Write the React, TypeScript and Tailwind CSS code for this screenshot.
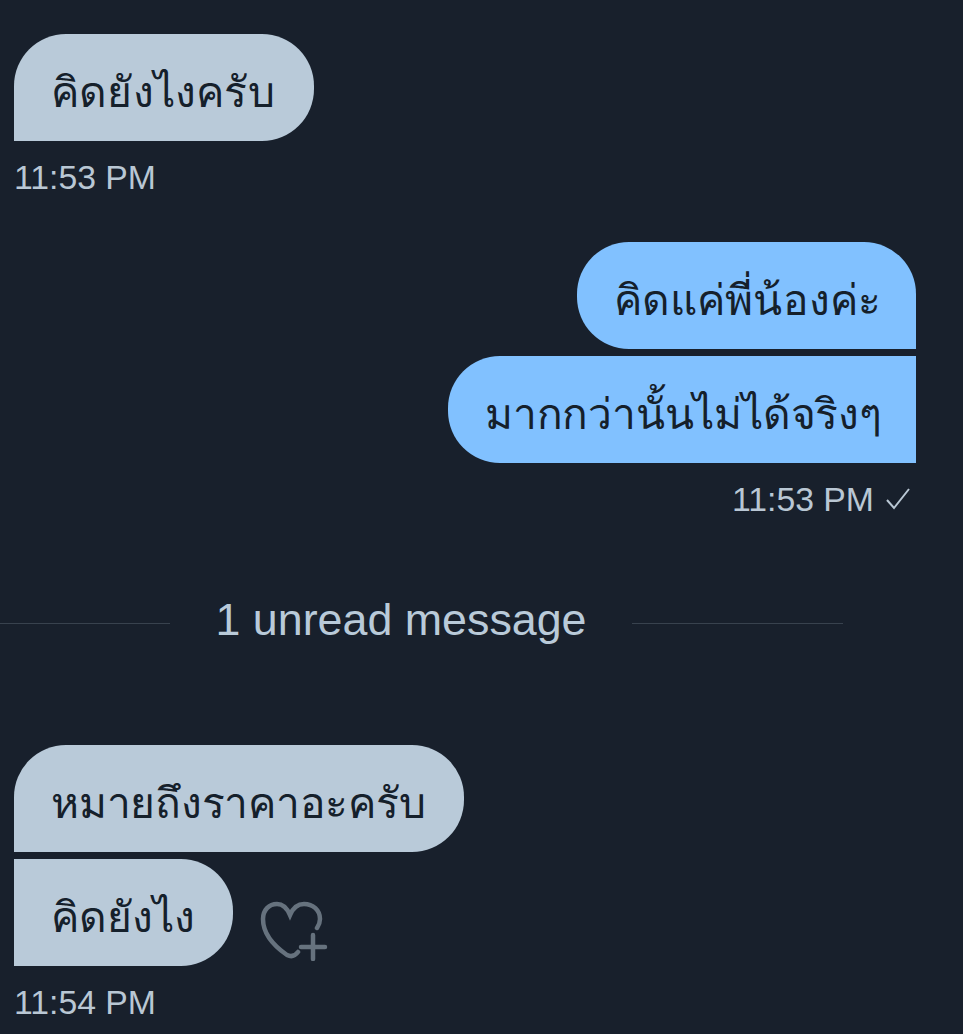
import { ReactNode } from 'react';

function Bubble({ children, mine, shape }: { children: ReactNode; mine?: boolean; shape: string }) {
  return (
    <div
      className={`flex h-[107px] items-center pl-[37px] pt-[6px] text-[42.5px] font-medium text-[#15202b] ${shape} ${mine ? 'bg-[#81c1ff]' : 'bg-[#b9cad9]'}`}
    >
      <span className="whitespace-nowrap">{children}</span>
    </div>
  );
}

function Stamp({ children }: { children: ReactNode }) {
  return <div className="text-[33.75px] leading-[40px] text-[#b9c7d4]">{children}</div>;
}

export default function App() {
  return (
    <div className="h-[1034px] w-[963px] overflow-hidden bg-[#18202c] font-['Noto_Sans',sans-serif]">
      {/* first incoming */}
      <div className="flex flex-col items-start pl-[14px] pt-[34px]">
        <Bubble shape="w-[300px] rounded-t-[52px] rounded-br-[52px] tracking-[0.2px]">คิดยังไงครับ</Bubble>
        <div className="mt-[16px] font-['Liberation_Sans',sans-serif]">
          <Stamp>11:53 PM</Stamp>
        </div>
      </div>

      {/* mine */}
      <div className="mt-[45px] flex flex-col items-end gap-[7px] pr-[47px]">
        <Bubble mine shape="w-[339px] rounded-t-[52px] rounded-bl-[52px] tracking-[0.1px]">คิดแค่พี่น้องค่ะ</Bubble>
        <Bubble mine shape="w-[468px] rounded-l-[52px] tracking-[-0.2px]">มากกว่านั้นไม่ได้จริงๆ</Bubble>
        <div className="mr-[6px] mt-[9px] flex items-center gap-3 font-['Liberation_Sans',sans-serif]">
          <Stamp>11:53 PM</Stamp>
          <svg width="24" height="24" viewBox="0 0 24 24" fill="none" stroke="#b9c7d4" strokeWidth="2">
            <path d="M1 13l7 8L23 2" />
          </svg>
        </div>
      </div>

      {/* unread divider */}
      <div className="mt-[76px] flex items-center">
        <div className="h-px w-[170px] bg-[#38424e]" />
        <div className="w-[462px] pb-[8px] text-center font-['Liberation_Sans',sans-serif] text-[44.8px] leading-[48px] text-[#b9cad9]">
          1 unread message
        </div>
        <div className="h-px w-[211px] bg-[#38424e]" />
      </div>

      {/* second incoming */}
      <div className="mt-[94px] flex flex-col items-start gap-[7px] pl-[14px]">
        <Bubble shape="w-[450px] rounded-t-[52px] rounded-br-[52px] tracking-[-0.25px]">หมายถึงราคาอะครับ</Bubble>
        <div className="flex items-start gap-[27px]">
          <Bubble shape="w-[219px] rounded-r-[52px]">คิดยังไง</Bubble>
          <svg className="mt-[42px]" width="68" height="60" viewBox="0 0 68 60" fill="none" stroke="#66727e" strokeWidth="4.5" strokeLinecap="round">
            <path d="M38 51C35 55 31 56 27 54C14 45 3 33 3 18C3 9 9 3 17 3C23 3 27 7 30 14C33 7 38 3 44 3C53 3 60 9 60 18C60 21 59 24 57 27" />
            <path d="M53 34V58M41 46H65" />
          </svg>
        </div>
        <div className="mt-[9px] font-['Liberation_Sans',sans-serif]">
          <Stamp>11:54 PM</Stamp>
        </div>
      </div>
    </div>
  );
}
